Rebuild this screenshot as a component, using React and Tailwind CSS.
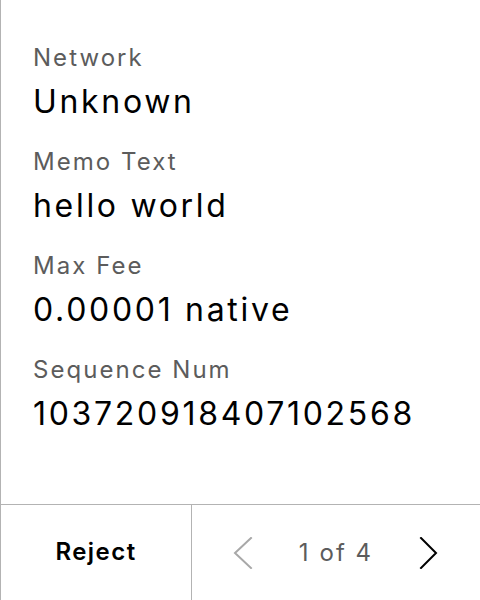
const fields = [
  { label: 'Network', value: 'Unknown' },
  { label: 'Memo Text', value: 'hello world' },
  { label: 'Max Fee', value: '0.00001 native' },
  { label: 'Sequence Num', value: '103720918407102568' },
];

const Chevron = ({ dir, className }) => (
  <svg width="20" height="32" viewBox="0 0 20 32" fill="none" className={className}>
    <path
      d={dir === 'left' ? 'M18 1 L2 16 L18 31' : 'M2 1 L17 16 L2 31'}
      stroke="currentColor"
      strokeWidth="2"
      strokeLinecap="square"
      strokeLinejoin="miter"
    />
  </svg>
);

export default function App() {
  return (
    <div
      className="w-[480px] h-[600px] bg-white flex flex-col border-l border-[#b3b3b3]"
      style={{ fontFamily: 'Inter, "Noto Sans", sans-serif' }}
    >
      {/* Details */}
      <div className="flex-1 flex flex-col gap-6 pt-[42px] pl-8">
        {fields.map((f) => (
          <div key={f.label} className="flex flex-col gap-2">
            <p className="text-[24px] leading-[32px] tracking-[0.085em] text-[#5c5c5c]">{f.label}</p>
            <p className="text-[32px] leading-[40px] tracking-[0.084em] text-black">{f.value}</p>
          </div>
        ))}
      </div>

      {/* Footer */}
      <div className="h-[96px] flex border-t border-[#b3b3b3]">
        <button className="w-[191px] flex items-center justify-center pb-[2px] text-[24px] font-semibold tracking-[0.06em] text-black border-r border-[#b3b3b3]">
          Reject
        </button>
        <div className="flex-1 flex items-center justify-between pl-[41px] pr-[41px]">
          <Chevron dir="left" className="text-[#a8a8a8]" />
          <span className="text-[24px] tracking-[0.085em] text-[#5c5c5c]">1 of 4</span>
          <Chevron dir="right" className="text-black" />
        </div>
      </div>
    </div>
  );
}
